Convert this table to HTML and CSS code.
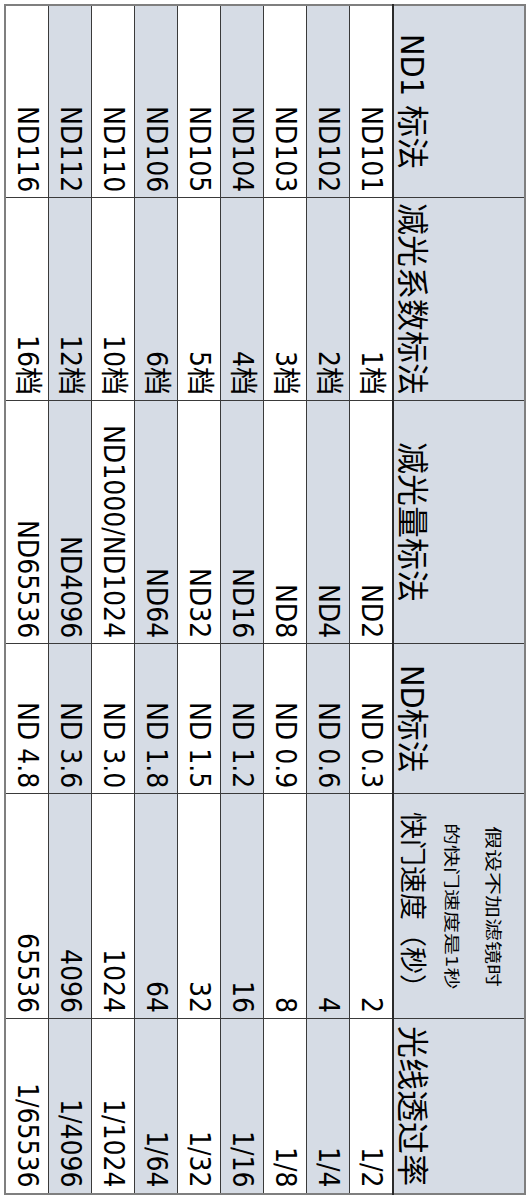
FILE: index.html
```html
<!DOCTYPE html>
<html lang="zh-CN">
<head>
<meta charset="utf-8">
<title>ND 减光镜标法对照表</title>
<link rel="stylesheet" href="styles.css">
</head>
<body>
<div class="page">
  <table class="nd">
    <tr class="head">
      <th class="c1">ND1 标法</th>
      <th class="c2">减光系数标法</th>
      <th class="c3">减光量标法</th>
      <th class="c4">ND标法</th>
      <th class="c5"><span class="note n1">假设不加滤镜时</span><span class="note n2">的快门速度是1秒</span><span class="main">快门速度（秒）</span></th>
      <th class="c6">光线透过率</th>
    </tr>
    <tr><td>ND101</td><td>1档</td><td>ND2</td><td>ND 0.3</td><td>2</td><td>1/2</td></tr>
    <tr class="shade"><td>ND102</td><td>2档</td><td>ND4</td><td>ND 0.6</td><td>4</td><td>1/4</td></tr>
    <tr><td>ND103</td><td>3档</td><td>ND8</td><td>ND 0.9</td><td>8</td><td>1/8</td></tr>
    <tr class="shade"><td>ND104</td><td>4档</td><td>ND16</td><td>ND 1.2</td><td>16</td><td>1/16</td></tr>
    <tr><td>ND105</td><td>5档</td><td>ND32</td><td>ND 1.5</td><td>32</td><td>1/32</td></tr>
    <tr class="shade"><td>ND106</td><td>6档</td><td>ND64</td><td>ND 1.8</td><td>64</td><td>1/64</td></tr>
    <tr><td>ND110</td><td>10档</td><td>ND1000/ND1024</td><td>ND 3.0</td><td>1024</td><td>1/1024</td></tr>
    <tr class="shade"><td>ND112</td><td>12档</td><td>ND4096</td><td>ND 3.6</td><td>4096</td><td>1/4096</td></tr>
    <tr><td>ND116</td><td>16档</td><td>ND65536</td><td>ND 4.8</td><td>65536</td><td>1/65536</td></tr>
  </table>
</div>
</body>
</html>
```
FILE: styles.css
```css
html, body {
  margin: 0;
  padding: 0;
  background: #ffffff;
}

.page {
  padding: 4px 0 0 4px;
}

.nd {
  writing-mode: vertical-rl;
  text-orientation: sideways;
  border-collapse: collapse;
  table-layout: fixed;
  border: 2px solid #7f7f7f;
  font-family: "DejaVu Sans Condensed", "DejaVu Sans", "Noto Sans CJK SC", sans-serif;
  font-stretch: condensed;
  color: #000000;
}

.nd th,
.nd td {
  border: 1px solid #3a3a3a;
  padding: 0;
  white-space: nowrap;
}

.nd th {
  width: 130px;
  background: #d6dce5;
  font-weight: normal;
  font-size: 32px;
  line-height: 36px;
  text-align: center;
  vertical-align: bottom;
  border-left: 2px solid #2a2a2a;
}

.nd td {
  width: 42px;
  font-size: 28px;
  line-height: 32px;
  text-align: end;
  vertical-align: middle;
  padding-inline-end: 5px;
}

.nd tr.shade td {
  background: #d6dce5;
}

.nd .c1 { height: 191px; }
.nd .c2 { height: 202px; }
.nd .c3 { height: 242px; }
.nd .c4 { height: 149px; }
.nd .c5 { height: 224px; }
.nd .c6 { height: 174px; }

.nd .note,
.nd .main {
  display: block;
}

.nd .main {
  font-size: 27px;
  line-height: 36px;
}

.nd .note {
  line-height: 42px;
  transform: scaleX(0.72);
}

.nd .n1 {
  font-size: 23px;
}

.nd .n2 {
  font-size: 22px;
}
```
